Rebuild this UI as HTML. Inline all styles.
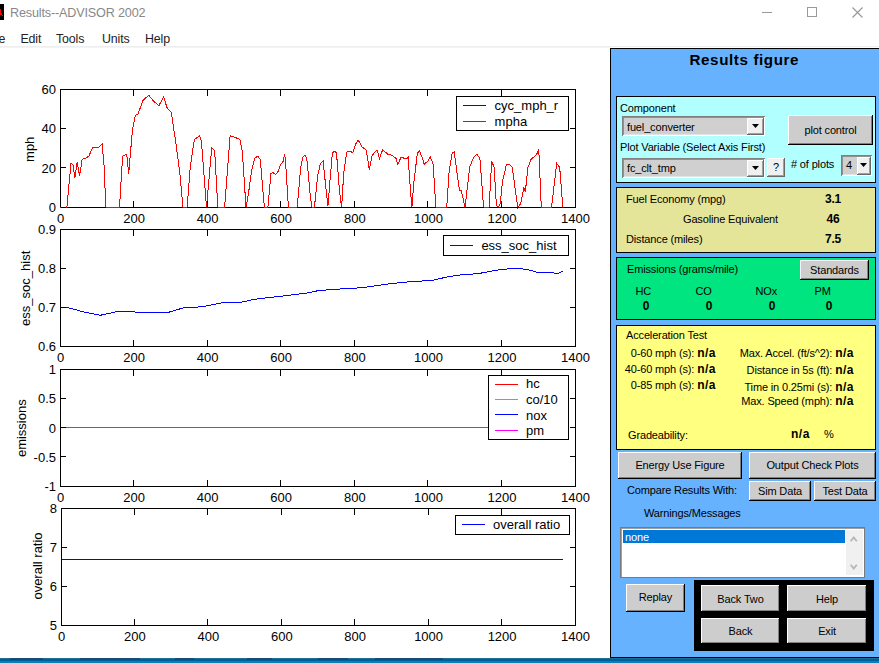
<!DOCTYPE html>
<html><head><meta charset="utf-8"><style>
html,body{margin:0;padding:0;}
body{width:879px;height:663px;overflow:hidden;background:#fff;position:relative;font-family:"Liberation Sans", sans-serif;}
.a{position:absolute;}
.tx{position:absolute;white-space:nowrap;font-size:11px;line-height:13px;color:#000;letter-spacing:-0.15px;}
.b{font-weight:bold;font-size:12px;}
.tx b{font-size:12px;letter-spacing:0.5px;}
.na{letter-spacing:0.5px}
.btn{position:absolute;background:#cdcdcd;box-shadow:inset -1px -1px #000,inset 1px 1px #fff,inset -2px -2px #808080;font-size:11px;color:#000;text-align:center;white-space:nowrap;box-sizing:border-box;}
.pop{position:absolute;background:#d0d0d0;box-shadow:inset 1px 1px #808080,inset -1px -1px #fff,inset 2px 2px #909090,inset -2px -2px #e3e3e3;box-sizing:border-box;font-size:11px;}
.btn2{position:absolute;background:#f0f0f0;box-shadow:inset -1px -1px #6a6a6a,inset 1px 1px #fff,inset -2px -2px #a0a0a0;box-sizing:border-box;}
.box{position:absolute;border:1px solid #000;box-sizing:border-box;}
</style></head><body>
<svg class="a" style="left:0;top:0" width="879" height="663"><style>.t{font-family:"Liberation Sans",sans-serif;font-size:13px;fill:#000}</style><g shape-rendering="crispEdges"><polyline points="60.0,207.5 66.9,207.5 71.0,162.9 73.0,165.0 74.9,177.7 77.1,162.3 79.6,175.6 82.2,159.2 85.7,158.2 88.8,156.2 92.9,146.9 96.0,148.0 99.0,146.9 102.1,143.9 104.2,167.4 105.8,207.5 119.5,207.5 122.6,156.2 126.7,154.1 128.7,173.5 132.4,130.5 135.3,115.2 137.9,114.2 143.1,100.2 148.8,95.3 153.3,100.9 159.0,105.6 163.5,96.8 167.2,108.0 171.3,112.1 175.8,142.8 179.9,173.6 183.0,207.5 187.1,207.5 190.2,167.4 194.3,139.8 199.4,135.7 201.4,140.8 206.5,207.5 211.7,148.0 214.7,151.0 217.8,207.5 224.6,207.5 230.1,135.7 232.0,136.3 239.8,139.2 242.3,151.0 244.3,181.8 246.0,207.5 248.4,194.0 251.5,171.5 254.6,158.2 257.6,156.2 260.3,159.2 262.8,189.9 264.4,207.5 267.9,207.5 271.0,173.5 273.0,172.5 275.5,174.6 278.1,171.5 280.2,165.4 283.2,161.3 284.7,154.1 285.7,163.3 288.4,207.5 297.2,207.5 300.7,167.4 302.7,157.2 304.7,155.1 306.8,158.2 309.9,192.0 311.9,207.5 314.4,207.5 317.7,175.6 320.5,163.3 323.2,161.3 324.6,175.6 327.9,206.3 329.9,181.8 332.4,153.1 334.9,151.0 336.5,153.1 339.6,192.0 341.6,207.5 343.7,173.5 346.7,152.1 349.8,151.0 352.9,152.7 355.3,144.9 358.0,139.8 362.1,146.9 366.2,150.0 369.3,169.5 372.3,155.1 377.0,150.0 379.5,158.2 382.6,150.0 387.7,154.1 391.8,155.1 395.9,158.2 397.9,164.3 401.0,157.2 404.1,158.2 407.2,158.2 408.2,157.2 409.8,181.8 411.9,207.5 413.9,181.8 417.4,153.1 419.5,151.0 422.1,157.2 424.2,164.3 427.6,161.3 430.3,157.2 433.2,164.3 435.8,207.5 446.7,207.5 449.1,171.5 452.2,153.1 454.3,152.1 456.3,167.4 459.4,189.9 461.4,191.0 465.1,207.5 469.6,167.4 473.7,157.2 476.8,154.1 479.9,158.2 483.6,207.5 489.1,207.5 491.7,161.3 494.2,167.4 496.3,204.3 498.0,207.5 500.3,203.3 502.4,181.8 506.5,164.3 509.6,164.3 512.2,167.4 517.8,207.5 520.8,203.3 523.9,187.9 525.3,192.0 528.0,167.4 531.1,159.2 536.2,155.1 538.8,150.0 541.3,207.5 551.5,207.5 556.7,163.3 559.7,167.4 562.8,207.5" fill="none" stroke="#ff0000" stroke-width="1"/></g><rect x="60.5" y="89.5" width="515" height="118" fill="none" stroke="#000" stroke-width="1" shape-rendering="crispEdges"/>
<path d="M60.0,207.5 H66.9 M105.8,207.5 H119.5 M183.0,207.5 H187.1 M217.8,207.5 H224.6 M264.4,207.5 H267.9 M288.4,207.5 H297.2 M311.9,207.5 H314.4 M435.8,207.5 H446.7 M483.6,207.5 H489.1 M541.3,207.5 H551.5" stroke="#ff0000" shape-rendering="crispEdges"/>
<text x="60.5" y="223" text-anchor="middle" class="t">0</text>
<path d="M133.5,207 v-6 M133.5,90 v6" stroke="#000" shape-rendering="crispEdges"/>
<text x="134.1" y="223" text-anchor="middle" class="t">200</text>
<path d="M207.5,207 v-6 M207.5,90 v6" stroke="#000" shape-rendering="crispEdges"/>
<text x="207.6" y="223" text-anchor="middle" class="t">400</text>
<path d="M280.5,207 v-6 M280.5,90 v6" stroke="#000" shape-rendering="crispEdges"/>
<text x="281.2" y="223" text-anchor="middle" class="t">600</text>
<path d="M354.5,207 v-6 M354.5,90 v6" stroke="#000" shape-rendering="crispEdges"/>
<text x="354.8" y="223" text-anchor="middle" class="t">800</text>
<path d="M427.5,207 v-6 M427.5,90 v6" stroke="#000" shape-rendering="crispEdges"/>
<text x="428.4" y="223" text-anchor="middle" class="t">1000</text>
<path d="M501.5,207 v-6 M501.5,90 v6" stroke="#000" shape-rendering="crispEdges"/>
<text x="501.9" y="223" text-anchor="middle" class="t">1200</text>
<text x="575.5" y="223" text-anchor="middle" class="t">1400</text>
<path d="M61,207.5 h5 M575,207.5 h-5" stroke="#000" shape-rendering="crispEdges"/>
<text x="56" y="212.0" text-anchor="end" class="t">0</text>
<path d="M61,167.5 h5 M575,167.5 h-5" stroke="#000" shape-rendering="crispEdges"/>
<text x="56" y="172.7" text-anchor="end" class="t">20</text>
<path d="M61,128.5 h5 M575,128.5 h-5" stroke="#000" shape-rendering="crispEdges"/>
<text x="56" y="133.3" text-anchor="end" class="t">40</text>
<path d="M61,89.5 h5 M575,89.5 h-5" stroke="#000" shape-rendering="crispEdges"/>
<text x="56" y="94.0" text-anchor="end" class="t">60</text><g shape-rendering="crispEdges"><polyline points="60.5,307.5 68.6,307.8 85.1,312.3 100.2,315.3 115.3,312.0 130.4,311.4 142.4,312.9 166.5,312.9 184.6,307.5 201.2,306.9 220.8,303.0 240.4,302.4 254.0,299.4 266.0,297.9 287.1,295.5 305.2,293.3 320.0,290.3 339.1,289.4 342.1,287.9 345.0,289.0 364.7,287.3 390.4,283.7 411.5,281.6 432.6,280.4 447.6,276.8 462.7,274.6 477.8,273.7 498.9,269.8 514.0,268.3 526.0,269.2 538.1,272.5 553.2,272.8 557.7,273.7 562.8,271.3" fill="none" stroke="#0000ff" stroke-width="1"/></g><rect x="60.5" y="229.5" width="515" height="117" fill="none" stroke="#000" stroke-width="1" shape-rendering="crispEdges"/>

<text x="60.5" y="362" text-anchor="middle" class="t">0</text>
<path d="M133.5,346 v-6 M133.5,230 v6" stroke="#000" shape-rendering="crispEdges"/>
<text x="134.1" y="362" text-anchor="middle" class="t">200</text>
<path d="M207.5,346 v-6 M207.5,230 v6" stroke="#000" shape-rendering="crispEdges"/>
<text x="207.6" y="362" text-anchor="middle" class="t">400</text>
<path d="M280.5,346 v-6 M280.5,230 v6" stroke="#000" shape-rendering="crispEdges"/>
<text x="281.2" y="362" text-anchor="middle" class="t">600</text>
<path d="M354.5,346 v-6 M354.5,230 v6" stroke="#000" shape-rendering="crispEdges"/>
<text x="354.8" y="362" text-anchor="middle" class="t">800</text>
<path d="M427.5,346 v-6 M427.5,230 v6" stroke="#000" shape-rendering="crispEdges"/>
<text x="428.4" y="362" text-anchor="middle" class="t">1000</text>
<path d="M501.5,346 v-6 M501.5,230 v6" stroke="#000" shape-rendering="crispEdges"/>
<text x="501.9" y="362" text-anchor="middle" class="t">1200</text>
<text x="575.5" y="362" text-anchor="middle" class="t">1400</text>
<path d="M61,346.5 h5 M575,346.5 h-5" stroke="#000" shape-rendering="crispEdges"/>
<text x="56" y="351.0" text-anchor="end" class="t">0.6</text>
<path d="M61,307.5 h5 M575,307.5 h-5" stroke="#000" shape-rendering="crispEdges"/>
<text x="56" y="312.0" text-anchor="end" class="t">0.7</text>
<path d="M61,268.5 h5 M575,268.5 h-5" stroke="#000" shape-rendering="crispEdges"/>
<text x="56" y="273.0" text-anchor="end" class="t">0.8</text>
<path d="M61,229.5 h5 M575,229.5 h-5" stroke="#000" shape-rendering="crispEdges"/>
<text x="56" y="234.0" text-anchor="end" class="t">0.9</text><path d="M61,427.5 H563" stroke="#ff00ff" shape-rendering="crispEdges"/><rect x="60.5" y="369.5" width="515" height="117" fill="none" stroke="#000" stroke-width="1" shape-rendering="crispEdges"/>

<text x="60.5" y="502" text-anchor="middle" class="t">0</text>
<path d="M133.5,486 v-6 M133.5,370 v6" stroke="#000" shape-rendering="crispEdges"/>
<text x="134.1" y="502" text-anchor="middle" class="t">200</text>
<path d="M207.5,486 v-6 M207.5,370 v6" stroke="#000" shape-rendering="crispEdges"/>
<text x="207.6" y="502" text-anchor="middle" class="t">400</text>
<path d="M280.5,486 v-6 M280.5,370 v6" stroke="#000" shape-rendering="crispEdges"/>
<text x="281.2" y="502" text-anchor="middle" class="t">600</text>
<path d="M354.5,486 v-6 M354.5,370 v6" stroke="#000" shape-rendering="crispEdges"/>
<text x="354.8" y="502" text-anchor="middle" class="t">800</text>
<path d="M427.5,486 v-6 M427.5,370 v6" stroke="#000" shape-rendering="crispEdges"/>
<text x="428.4" y="502" text-anchor="middle" class="t">1000</text>
<path d="M501.5,486 v-6 M501.5,370 v6" stroke="#000" shape-rendering="crispEdges"/>
<text x="501.9" y="502" text-anchor="middle" class="t">1200</text>
<text x="575.5" y="502" text-anchor="middle" class="t">1400</text>
<path d="M61,486.5 h5 M575,486.5 h-5" stroke="#000" shape-rendering="crispEdges"/>
<text x="56" y="491.0" text-anchor="end" class="t">-1</text>
<path d="M61,456.5 h5 M575,456.5 h-5" stroke="#000" shape-rendering="crispEdges"/>
<text x="56" y="461.8" text-anchor="end" class="t">-0.5</text>
<path d="M61,427.5 h5 M575,427.5 h-5" stroke="#000" shape-rendering="crispEdges"/>
<text x="56" y="432.5" text-anchor="end" class="t">0</text>
<path d="M61,398.5 h5 M575,398.5 h-5" stroke="#000" shape-rendering="crispEdges"/>
<text x="56" y="403.2" text-anchor="end" class="t">0.5</text>
<path d="M61,369.5 h5 M575,369.5 h-5" stroke="#000" shape-rendering="crispEdges"/>
<text x="56" y="374.0" text-anchor="end" class="t">1</text><path d="M62,559.5 H563" stroke="#0000ff" shape-rendering="crispEdges"/><rect x="61.5" y="508.5" width="514" height="117" fill="none" stroke="#000" stroke-width="1" shape-rendering="crispEdges"/>

<text x="61.5" y="641" text-anchor="middle" class="t">0</text>
<path d="M134.5,625 v-6 M134.5,509 v6" stroke="#000" shape-rendering="crispEdges"/>
<text x="134.9" y="641" text-anchor="middle" class="t">200</text>
<path d="M207.5,625 v-6 M207.5,509 v6" stroke="#000" shape-rendering="crispEdges"/>
<text x="208.4" y="641" text-anchor="middle" class="t">400</text>
<path d="M281.5,625 v-6 M281.5,509 v6" stroke="#000" shape-rendering="crispEdges"/>
<text x="281.8" y="641" text-anchor="middle" class="t">600</text>
<path d="M354.5,625 v-6 M354.5,509 v6" stroke="#000" shape-rendering="crispEdges"/>
<text x="355.2" y="641" text-anchor="middle" class="t">800</text>
<path d="M428.5,625 v-6 M428.5,509 v6" stroke="#000" shape-rendering="crispEdges"/>
<text x="428.6" y="641" text-anchor="middle" class="t">1000</text>
<path d="M501.5,625 v-6 M501.5,509 v6" stroke="#000" shape-rendering="crispEdges"/>
<text x="502.1" y="641" text-anchor="middle" class="t">1200</text>
<text x="575.5" y="641" text-anchor="middle" class="t">1400</text>
<path d="M62,625.5 h5 M575,625.5 h-5" stroke="#000" shape-rendering="crispEdges"/>
<text x="57" y="630.0" text-anchor="end" class="t">5</text>
<path d="M62,586.5 h5 M575,586.5 h-5" stroke="#000" shape-rendering="crispEdges"/>
<text x="57" y="591.0" text-anchor="end" class="t">6</text>
<path d="M62,547.5 h5 M575,547.5 h-5" stroke="#000" shape-rendering="crispEdges"/>
<text x="57" y="552.0" text-anchor="end" class="t">7</text>
<path d="M62,508.5 h5 M575,508.5 h-5" stroke="#000" shape-rendering="crispEdges"/>
<text x="57" y="513.0" text-anchor="end" class="t">8</text><text transform="translate(34,149.3) rotate(-90)" text-anchor="middle" class="t">mph</text><text transform="translate(30,288.3) rotate(-90)" text-anchor="middle" class="t">ess_soc_hist</text><text transform="translate(25.6,428.2) rotate(-90)" text-anchor="middle" class="t">emissions</text><text transform="translate(42,566) rotate(-90)" text-anchor="middle" class="t">overall ratio</text><rect x="456.5" y="96.5" width="112" height="34" fill="#fff" stroke="#000" shape-rendering="crispEdges"/>
<path d="M463,105.5 H486" stroke="#0000ff" shape-rendering="crispEdges"/>
<text x="494.6" y="110" class="t">cyc_mph_r</text>
<path d="M463,121.5 H486" stroke="#ff0000" shape-rendering="crispEdges"/>
<text x="494.6" y="125.5" class="t">mpha</text><rect x="443.5" y="235.5" width="125" height="20" fill="#fff" stroke="#000" shape-rendering="crispEdges"/>
<path d="M450,245.5 H473" stroke="#0000ff" shape-rendering="crispEdges"/>
<text x="481.4" y="249.7" class="t">ess_soc_hist</text><rect x="488.5" y="375.5" width="80" height="64" fill="#fff" stroke="#000" shape-rendering="crispEdges"/>
<path d="M495,384.5 H518" stroke="#ff0000" shape-rendering="crispEdges"/>
<text x="526" y="388" class="t">hc</text>
<path d="M495,399.5 H518" stroke="#00ff00" shape-rendering="crispEdges"/>
<text x="526" y="403.5" class="t">co/10</text>
<path d="M495,414.5 H518" stroke="#0000ff" shape-rendering="crispEdges"/>
<text x="526" y="419.5" class="t">nox</text>
<path d="M495,430.5 H518" stroke="#ff00ff" shape-rendering="crispEdges"/>
<text x="526" y="435" class="t">pm</text><rect x="455.5" y="515.5" width="114" height="19" fill="#fff" stroke="#000" shape-rendering="crispEdges"/>
<path d="M462,524.5 H485" stroke="#0000ff" shape-rendering="crispEdges"/>
<text x="493" y="529" class="t">overall ratio</text></svg>
<div class="a" style="left:0;top:4px;width:4px;height:16px;background:#000"></div><svg class="a" style="left:0;top:4px" width="4" height="16"><path d="M0,5 H1 V9 H2 V11 H3 V12 H2 V11 H0 Z" fill="#f00"/></svg><div class="tx" style="left:10px;top:4.5px;font-size:12.6px;line-height:16px;color:#888">Results--ADVISOR 2002</div><div class="a" style="left:762px;top:12px;width:10px;height:1px;background:#999"></div><div class="a" style="left:807px;top:7px;width:10px;height:10px;box-sizing:border-box;border:1px solid #999"></div><svg class="a" style="left:852px;top:7px" width="11" height="11"><path d="M0.5,0.5 L10.5,10.5 M10.5,0.5 L0.5,10.5" stroke="#999" stroke-width="1.15"/></svg><div class="tx" style="left:-14px;top:30.5px;font-size:12.4px;line-height:16px;color:#222">File</div><div class="tx" style="left:20.5px;top:30.5px;font-size:12.4px;line-height:16px;color:#222">Edit</div><div class="tx" style="left:56px;top:30.5px;font-size:12.4px;line-height:16px;color:#222">Tools</div><div class="tx" style="left:102px;top:30.5px;font-size:12.4px;line-height:16px;color:#222">Units</div><div class="tx" style="left:145px;top:30.5px;font-size:12.4px;line-height:16px;color:#222">Help</div><div class="a" style="left:0;top:46px;width:879px;height:1px;background:#eeeeee"></div><div class="a" style="left:0;top:47px;width:610px;height:1px;background:#f4f4f4"></div><div class="a" style="left:610px;top:48px;width:280px;height:610px;background:#66b2ff;box-sizing:border-box;border:1px solid #000"></div><div class="tx b" style="left:689.5px;top:50.3px;font-size:15.2px;line-height:20px;letter-spacing:0.6px">Results figure</div><div class="box" style="left:616px;top:96px;width:260px;height:87px;background:#b2ffff"></div><div class="tx" style="left:620px;top:102px;">Component</div><div class="pop" style="left:622px;top:116px;width:143px;height:20px"><div class="tx" style="left:5px;top:4.5px">fuel_converter</div><div class="btn2" style="left:125px;top:2px;width:17px;height:17px"><svg class="a" style="left:5px;top:6px" width="7" height="4"><path d="M0,0 H7 L3.5,4 Z" fill="#000"/></svg></div></div><div class="tx" style="left:620px;top:141px;">Plot Variable (Select Axis First)</div><div class="pop" style="left:622px;top:158px;width:143px;height:20px"><div class="tx" style="left:5px;top:4px">fc_clt_tmp</div><div class="btn2" style="left:125px;top:2px;width:17px;height:17px"><svg class="a" style="left:5px;top:6px" width="7" height="4"><path d="M0,0 H7 L3.5,4 Z" fill="#000"/></svg></div></div><div class="btn2" style="left:767px;top:158px;width:18px;height:19px"><div class="tx" style="left:0;width:18px;text-align:center;top:3px">?</div></div><div class="btn" style="left:788px;top:115px;width:85px;height:30px;"><div class="tx" style="left:0;width:85px;text-align:center;top:9px">plot control</div></div><div class="tx" style="left:791px;top:157.5px;">#&nbsp;of plots</div><div class="pop" style="left:841px;top:155px;width:31px;height:21px"><div class="tx" style="left:5px;top:4px">4</div><div class="btn2" style="left:16px;top:2px;width:14px;height:18px"><svg class="a" style="left:3px;top:6px" width="7" height="4"><path d="M0,0 H7 L3.5,4 Z" fill="#000"/></svg></div></div><div class="box" style="left:616px;top:187px;width:260px;height:66px;background:#e5e599"></div><div class="tx" style="left:626px;top:193px;">Fuel Economy (mpg)</div><div class="tx" style="left:683px;top:212.7px;">Gasoline Equivalent</div><div class="tx" style="left:626px;top:232.6px;">Distance (miles)</div><div class="tx b" style="left:783px;width:100px;text-align:center;top:193px">3.1</div><div class="tx b" style="left:783px;width:100px;text-align:center;top:212.7px">46</div><div class="tx b" style="left:783px;width:100px;text-align:center;top:232.6px">7.5</div><div class="box" style="left:616px;top:257px;width:260px;height:63px;background:#00e57f"></div><div class="tx" style="left:627px;top:263px;">Emissions (grams/mile)</div><div class="btn" style="left:800px;top:260px;width:69px;height:20px;"><div class="tx" style="left:0;width:69px;text-align:center;top:4px">Standards</div></div><div class="tx" style="left:635.5px;top:284.5px;">HC</div><div class="tx b" style="left:596px;width:100px;text-align:center;top:300px">0</div><div class="tx" style="left:695.5px;top:284.5px;">CO</div><div class="tx b" style="left:659px;width:100px;text-align:center;top:300px">0</div><div class="tx" style="left:755.5px;top:284.5px;">NOx</div><div class="tx b" style="left:722px;width:100px;text-align:center;top:300px">0</div><div class="tx" style="left:814.5px;top:284.5px;">PM</div><div class="tx b" style="left:779px;width:100px;text-align:center;top:300px">0</div><div class="box" style="left:616px;top:325px;width:260px;height:125px;background:#ffff80"></div><div class="tx" style="left:626px;top:328.7px;">Acceleration Test</div><div class="tx" style="right:163px;top:347px">0-60 mph (s): <b>n/a</b></div><div class="tx" style="right:163px;top:363px">40-60 mph (s): <b>n/a</b></div><div class="tx" style="right:163px;top:378.7px">0-85 mph (s): <b>n/a</b></div><div class="tx" style="right:25px;top:347px">Max. Accel. (ft/s^2): <b>n/a</b></div><div class="tx" style="right:25px;top:364px">Distance in 5s (ft): <b>n/a</b></div><div class="tx" style="right:25px;top:380.8px">Time in 0.25mi (s): <b>n/a</b></div><div class="tx" style="right:25px;top:394.6px">Max. Speed (mph): <b>n/a</b></div><div class="tx" style="left:628px;top:428.8px;">Gradeability:</div><div class="tx b na" style="left:791px;top:428px;">n/a</div><div class="tx" style="left:824px;top:428.4px;">%</div><div class="btn" style="left:618px;top:452px;width:124px;height:27px;"><div class="tx" style="left:0;width:124px;text-align:center;top:7px">Energy Use Figure</div></div><div class="btn" style="left:749px;top:452px;width:127px;height:27px;"><div class="tx" style="left:0;width:127px;text-align:center;top:7px">Output Check Plots</div></div><div class="tx" style="left:627px;top:484.4px;">Compare Results With:</div><div class="btn" style="left:749px;top:481px;width:62px;height:20px;"><div class="tx" style="left:0;width:62px;text-align:center;top:3.5px">Sim Data</div></div><div class="btn" style="left:814px;top:481px;width:62px;height:20px;"><div class="tx" style="left:0;width:62px;text-align:center;top:3.5px">Test Data</div></div><div class="tx" style="left:644px;top:506.7px;">Warnings/Messages</div><div class="a" style="left:620px;top:527px;width:245px;height:51px;background:#fff;box-sizing:border-box;border:1px solid #7a7a7a;box-shadow:inset 1px 1px #a0a0a0,inset -1px -1px #fff"></div><div class="a" style="left:623px;top:530px;width:222px;height:13px;background:#0078d7"></div><div class="tx" style="left:625px;top:531px;color:#fff">none</div><div class="a" style="left:846px;top:530px;width:17px;height:45px;background:#f0f0f0"></div><svg class="a" style="left:850px;top:536px" width="8" height="6"><path d="M0.7,5.3 L3.75,1.5 L6.8,5.3" fill="none" stroke="#bab4b4" stroke-width="1.8"/></svg><svg class="a" style="left:850px;top:564px" width="8" height="6"><path d="M0.7,0.7 L3.75,4.5 L6.8,0.7" fill="none" stroke="#bab4b4" stroke-width="1.8"/></svg><div class="btn" style="left:626px;top:584px;width:59px;height:28px;"><div class="tx" style="left:0;width:59px;text-align:center;top:7px">Replay</div></div><div class="a" style="left:694px;top:580px;width:180px;height:71px;background:#000"></div><div class="btn" style="left:701px;top:585px;width:79px;height:27px;"><div class="tx" style="left:0;width:79px;text-align:center;top:7.5px">Back Two</div></div><div class="btn" style="left:787px;top:585px;width:80px;height:27px;"><div class="tx" style="left:0;width:80px;text-align:center;top:7.5px">Help</div></div><div class="btn" style="left:701px;top:618px;width:79px;height:26px;"><div class="tx" style="left:0;width:79px;text-align:center;top:7px">Back</div></div><div class="btn" style="left:787px;top:618px;width:80px;height:26px;"><div class="tx" style="left:0;width:80px;text-align:center;top:7px">Exit</div></div><div class="a" style="left:0;top:658px;width:879px;height:5px;background:linear-gradient(180deg,#1e6e96 0,#1e6e96 1px,#005f9a 1px,#005f9a 3px,#0680b8 3px)"></div><div class="a" style="left:10px;top:658px;width:33px;height:2px;background:#1c3f6a;opacity:0.7"></div><div class="a" style="left:80px;top:658px;width:60px;height:2px;background:#1c3f6a;opacity:0.7"></div><div class="a" style="left:175px;top:658px;width:19px;height:2px;background:#1c3f6a;opacity:0.7"></div><div class="a" style="left:247px;top:658px;width:25px;height:2px;background:#1c3f6a;opacity:0.7"></div><div class="a" style="left:318px;top:658px;width:30px;height:2px;background:#1c3f6a;opacity:0.7"></div><div class="a" style="left:375px;top:658px;width:68px;height:2px;background:#1c3f6a;opacity:0.7"></div></body></html>
